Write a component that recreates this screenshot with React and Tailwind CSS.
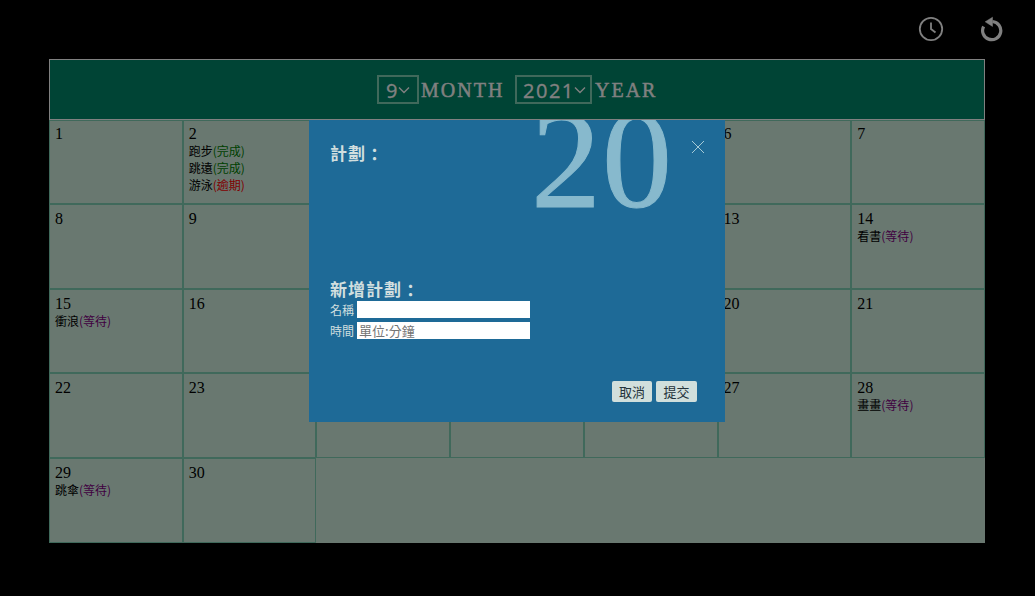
import React from "react";

const plans = {
  2: [["跑步", "完成"], ["跳遠", "完成"], ["游泳", "逾期"]],
  14: [["看書", "等待"]],
  15: [["衝浪", "等待"]],
  28: [["畫畫", "等待"]],
  29: [["跳傘", "等待"]],
};

const statusColor = {
  完成: "text-[#004000]",
  逾期: "text-[#800000]",
  等待: "text-[#400040]",
};

const days = Array.from({ length: 30 }, (_, i) => i + 1);

// Days behind the open dialog: columns 3 to 5 of the first four weeks.
const isCovered = (day) => day <= 28 && (day - 1) % 7 >= 2 && (day - 1) % 7 <= 4;

function Picker({ value, className }) {
  return (
    <button
      className={`flex h-[29px] items-center border-2 border-[#40695b] font-['Noto_Sans',sans-serif] text-[20px] leading-[25px] tracking-[1.5px] [-webkit-text-stroke:0.3px_#808080] ${className}`}
    >
      <span className="pt-[2px]">{value}</span>
      <svg className="-ml-[1px] h-3 w-3" viewBox="0 0 12 12" fill="none" stroke="currentColor" strokeWidth="1.4">
        <path d="M1 3.5 6 8.5l5-5" />
      </svg>
    </button>
  );
}

function Toolbar() {
  return (
    <div className="flex h-[59px] justify-end gap-[36px] pr-[31px] pt-4 text-[#808080]">
      <svg className="h-[26px] w-[26px]" viewBox="0 0 26 26" fill="none" stroke="currentColor">
        <circle cx="13" cy="13" r="11.2" strokeWidth="1.8" />
        <path d="M13 6.5V13l4.5 3.5" strokeWidth="1.8" />
      </svg>
      <svg className="h-[26px] w-[24px]" viewBox="0 0 24 26" fill="none" stroke="currentColor">
        <path d="M3.6 10.4a9.1 9.1 0 1 0 8.9-4.9" strokeWidth="3.2" />
        <path d="M12.5 1.2 5.2 5.8l7.3 4.6z" fill="currentColor" strokeWidth=".5" />
      </svg>
    </div>
  );
}

function DayCell({ day }) {
  return (
    <div className={`border border-[#40695b] pl-[5px] ${day <= 7 ? "pt-[3px]" : "pt-1"}`}>
      <div
        className={`-mb-px font-['Liberation_Serif',serif] text-[16px] leading-[19px] ${isCovered(day) ? "invisible" : ""}`}
      >
        {day}
      </div>
      {(plans[day] || []).map(([name, status]) => (
        <div key={name} className="text-[12px] leading-[17px]">
          {name}
          <span className={statusColor[status]}>({status})</span>
        </div>
      ))}
    </div>
  );
}

function PlanDialog() {
  return (
    <div className="absolute left-[260px] top-[61px] flex h-[302px] w-[416px] flex-col overflow-hidden bg-[#1e6a97] pl-[21px] text-[#d1dfdf]">
      <div className="absolute left-[222px] top-[-40px] font-['Liberation_Serif',serif] text-[140px] leading-[160px] tracking-[1px] text-[#87b9cd] [-webkit-text-stroke:1px_#87b9cd]">
        20
      </div>
      <button className="absolute left-[382px] top-[20px]" aria-label="close">
        <svg className="h-[14px] w-[14px]" viewBox="0 0 14 14" stroke="#a5cad6" strokeWidth="1">
          <path d="m1 1 12 12M13 1 1 13" />
        </svg>
      </button>
      <h2 className="mt-[21px] text-[17px] font-bold leading-6 tracking-[1px]">
        計劃<span className="relative top-[1px]">：</span>
      </h2>
      <h2 className="mt-[112px] text-[17px] font-bold leading-6 tracking-[1px]">
        新增計劃<span className="relative top-[1px]">：</span>
      </h2>
      <label className="flex h-[17px] items-center gap-[3px] text-[12px] leading-[16px]">
        名稱
        <input className="h-[17px] w-[173px] bg-white px-[2px] text-[13px] text-black outline-none" />
      </label>
      <label className="mt-1 flex h-[17px] items-center gap-[3px] text-[12px] leading-[16px]">
        時間
        <input
          placeholder="單位:分鐘"
          className="h-[17px] w-[173px] bg-white px-[2px] text-[13px] text-black outline-none placeholder:text-[#757575]"
        />
      </label>
      <div className="mt-[42px] flex justify-end gap-1 pr-7 text-[13px] leading-[21px] text-[#23323a]">
        <button className="h-[21px] w-10 rounded-[2px] bg-[#d1dfdc]">取消</button>
        <button className="h-[21px] w-[41px] rounded-[2px] bg-[#d1dfdc]">提交</button>
      </div>
    </div>
  );
}

export default function App() {
  return (
    <div className="h-[596px] w-[1035px] overflow-hidden bg-black font-['Noto_Sans_CJK_TC',sans-serif] text-black">
      <Toolbar />
      <main className="relative ml-[49px] h-[484px] w-[936px] bg-[#697870]">
        <header className="flex h-[61px] items-center justify-center border border-[#808080] bg-[#004435] font-['Liberation_Serif',serif] text-[20px] tracking-[2px] text-[#808080]">
          <Picker value="9" className="w-[42px] pl-[7px]" />
          <span className="ml-[2px] w-[94px] [-webkit-text-stroke:0.5px_#808080]">MONTH</span>
          <Picker value="2021" className="w-[77px] pl-[6px]" />
          <span className="ml-[3px] w-[62px] [-webkit-text-stroke:0.5px_#808080]">YEAR</span>
        </header>
        <div className="grid h-[423px] grid-cols-7 grid-rows-[84px_85px_84px_85px_85px]">
          {days.map((day) => (
            <DayCell key={day} day={day} />
          ))}
        </div>
        <PlanDialog />
      </main>
    </div>
  );
}
